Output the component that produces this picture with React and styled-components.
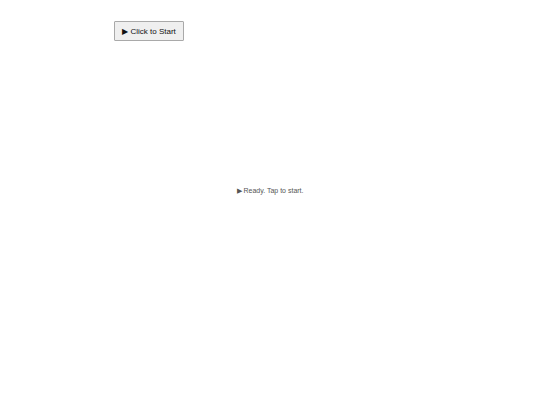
import React from "react";
import styled, { createGlobalStyle } from "styled-components";

const GlobalStyle = createGlobalStyle`
  html, body {
    margin: 0;
    padding: 0;
    background: #ffffff;
    font-family: "Liberation Sans", Arial, sans-serif;
  }
`;

const Page = styled.div`
  width: 540px;
  height: 405px;
  display: flex;
  flex-direction: column;
  align-items: center;
`;

const Toolbar = styled.div`
  width: 312px;
  padding-top: 21px;
  display: flex;
`;

const StartButton = styled.button`
  height: 20px;
  width: 70px;
  padding: 0;
  border: 1px solid #a9a9a9;
  border-radius: 1px;
  background: #efefef;
  color: #111;
  font-family: "Liberation Sans", Arial, sans-serif;
  font-size: 8px;
  display: flex;
  align-items: center;
  justify-content: center;
  gap: 2px;
  cursor: pointer;
`;

const Status = styled.div`
  margin-top: 146px;
  font-size: 7px;
  color: #555;
`;

export default function App() {
  return (
    <>
      <GlobalStyle />
      <Page>
        <Toolbar>
          <StartButton>▶ Click to Start</StartButton>
        </Toolbar>
        <Status>▶ Ready. Tap to start.</Status>
      </Page>
    </>
  );
}
